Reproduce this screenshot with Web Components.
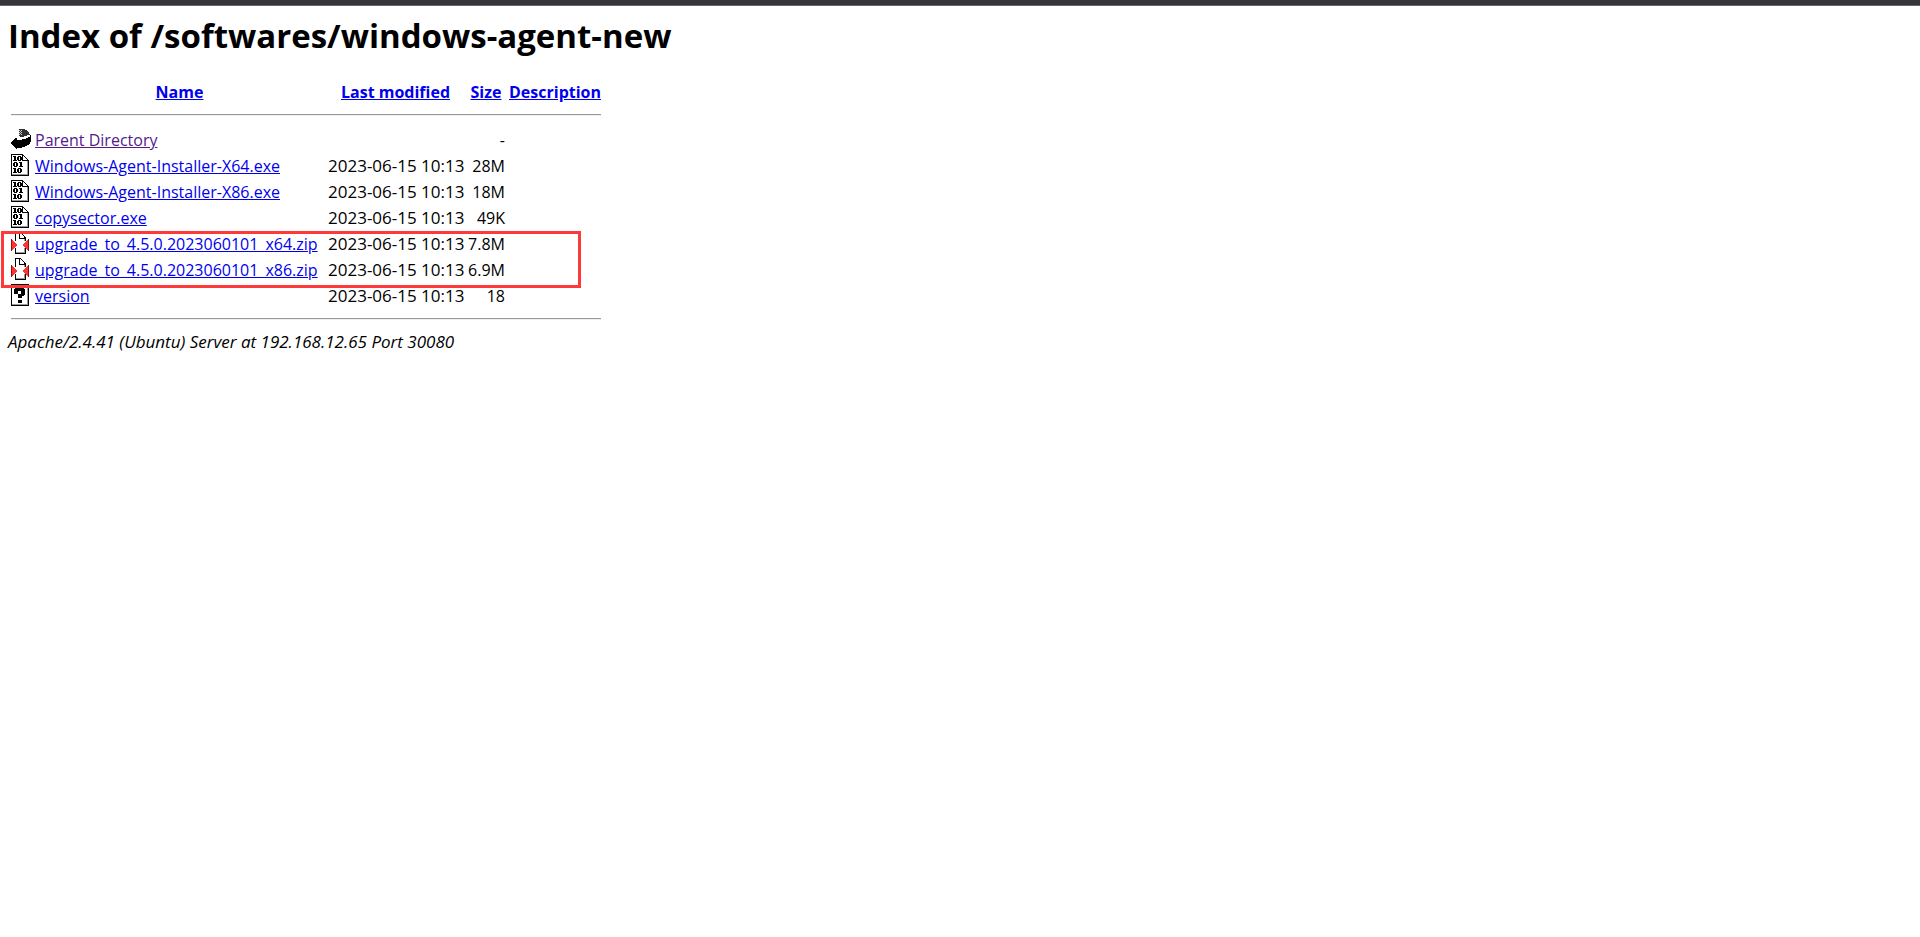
<!DOCTYPE html>
<html lang="en">
<head>
<meta charset="utf-8">
<title>Index of /softwares/windows-agent-new</title>
<style>
body { margin: 0; background: #fff; color: #000; font: 16px/22px "Open Sans", "Noto Sans", sans-serif; }
</style>
</head>
<body>
<index-page>
  <span slot="title">Index of /softwares/windows-agent-new</span>
  <directory-listing></directory-listing>
  <span slot="signature">Apache/2.4.41 (Ubuntu) Server at 192.168.12.65 Port 30080</span>
</index-page>

<script>
class IndexPage extends HTMLElement {
  constructor() {
    super();
    this.attachShadow({ mode: 'open' }).innerHTML = `
      <style>
        :host { display: block; }
        .edge { height: 5px; background: #35363a; border-bottom: 1px solid #69666b; }
        main { padding: 8px; }
        h1 { margin: 0 0 19px; font-size: 33px; line-height: 44px; font-weight: 700; }
        address { font-size: 17px; font-style: italic; }
      </style>
      <div class="edge"></div>
      <main>
        <h1><slot name="title"></slot></h1>
        <slot></slot>
        <address><slot name="signature"></slot></address>
      </main>`;
  }
}

const ICONS = {
  blank: '',
  back: `
    <path fill="#333" d="M8 1h6v1h2v1h1v1h1v2h1v1h-3v1h-3v1H9V8H8z"/>
    <path fill="#ccc" d="M8 2h1v1H8zM10 2h1v1h-1zM9 3h1v1H9zM8 4h1v1H8zM10 4h1v1h-1zM9 5h1v1H9zM8 6h1v1H8zM10 6h1v1h-1z"/>
    <path d="M19 7h1v7h-1v2h-1v1h-2v1h-2v1h-3v1H6v1H5v-1H4v-1H3v-1H2v-1H1v-1H0v-2h1v-1h1v-1h1v-1h1v-1h2v2h5v-1h4v-1h2V9h2z"/>`,
  binary: `
    <path d="M0 0h12v1h1v1h1v1h1v1h1v1h1v1h1v16H0z"/>
    <path fill="#fff" d="M1 1h10v6h5v13H1zM12 2h1v1h1v1h1v1h1v1h-4z"/>
    <path fill="#999" d="M16 7h1v14H1v-1h15z"/>
    <path fill-rule="evenodd" d="M2 2h3v4h1v1H2V6h1V3H2zM7 2h3v1h1v3h-1v1H7V6H6V3h1zM8 3v3h1V3z
      M3 8h3v1h1v3H6v1H3v-1H2V9h1zM4 9v3h1V9zM8 8h3v4h1v1H8v-1h1V9H8z
      M2 14h3v4h1v1H2v-1h1v-3H2zM7 14h3v1h1v3h-1v1H7v-1H6v-3h1zM8 15v3h1v-3z"/>`,
  compressed: `
    <path d="M4 0h6v1h1v1h1v1h1v1h1v1h1v17H4z"/>
    <path fill="#fff" d="M5 1h3v6h5v13H5zM9 1h1v1h1v1h1v1h1v2H9z"/>
    <path fill="#999" d="M13 7h1v14H5v-1h8z"/>
    <path fill="#fff" d="M4 9h2v7H4zM12 9h3v7h-3z"/>
    <path fill="#f33" d="M0 7h1v1h1v1h1v1h1v1h1v1h1v2H5v1H4v1H3v1H2v1H1v1H0zM18 7h-1v1h-1v1h-1v1h-1v1h-1v1h-1v2h1v1h1v1h1v1h1v1h1v1h1z"/>
    <path fill="#811" d="M0 7h1v12H0zM17 7h1v12h-1z"/>`,
  unknown: `
    <path d="M0 0h18v22H0z"/><path fill="#fff" d="M1 1h15v19H1z"/>
    <path fill="#999" d="M16 1h1v20H1v-1h15z"/>
    <path d="M4 4h9v1h1v6h-1v1h-2v2H7v-4h3V7H7v3H3V5h1zM7 16h4v3H7z"/>`
};

class FileIcon extends HTMLElement {
  connectedCallback() {
    if (this.shadowRoot) return;
    this.attachShadow({ mode: 'open' }).innerHTML = `
      <style>:host, svg { display: block; width: 20px; height: 22px; }</style>
      <svg viewBox="0 0 20 22" shape-rendering="crispEdges" aria-hidden="true">${ICONS[this.getAttribute('kind')]}</svg>`;
  }
}

const STAMP = '2023-06-15 10:13';
const FILES = [
  ['back', 'Parent Directory', '', '-'],
  ['binary', 'Windows-Agent-Installer-X64.exe', STAMP, '28M'],
  ['binary', 'Windows-Agent-Installer-X86.exe', STAMP, '18M'],
  ['binary', 'copysector.exe', STAMP, '49K'],
  ['compressed', 'upgrade_to_4.5.0.2023060101_x64.zip', STAMP, '7.8M'],
  ['compressed', 'upgrade_to_4.5.0.2023060101_x86.zip', STAMP, '6.9M'],
  ['unknown', 'version', STAMP, '18']
];

class DirectoryListing extends HTMLElement {
  constructor() {
    super();
    const row = ([kind, name, date, size]) => `
      <tr>
        <td class="pic"><file-icon kind="${kind}"></file-icon></td>
        <td><a href="#${name}" class="${kind}">${name}</a></td>
        <td class="date">${date}</td><td class="size">${size}</td><td></td>
      </tr>`;
    this.attachShadow({ mode: 'open' }).innerHTML = `
      <style>
        :host { display: block; position: relative; }
        table { border-spacing: 2px; table-layout: fixed; width: 596px; }
        th, td { padding: 2px 1px 0; white-space: nowrap; }
        .pic, .rule { padding: 1px; }
        th { text-align: center; }
        .icon { width: 22px; } .name { width: 291px; } .modified { width: 137px; }
        .bytes { width: 40px; }
        a { color: #00e; text-decoration: underline; }
        a.back { color: #551a8b; }
        .date, .size { text-align: right; }
        .date { font-size: 17px; }
        hr { margin: 8px 0; border: 0; border-top: 1px solid #9a9a9a; border-bottom: 1px solid #eee; }
        .highlight {
          position: absolute; left: -7px; top: 154px; width: 580px; height: 57px;
          box-sizing: border-box; border: 3px solid #ff3939; pointer-events: none;
        }
      </style>
      <table>
        <colgroup><col class="icon"><col class="name"><col class="modified"><col class="bytes"><col></colgroup>
        <thead>
          <tr>
            <th class="pic"><file-icon kind="blank"></file-icon></th>
            <th><a href="#name">Name</a></th><th><a href="#modified">Last modified</a></th>
            <th><a href="#size">Size</a></th><th><a href="#description">Description</a></th>
          </tr>
          <tr><th class="rule" colspan="5"><hr></th></tr>
        </thead>
        <tbody>${FILES.map(row).join('')}</tbody>
        <tfoot><tr><th class="rule" colspan="5"><hr></th></tr></tfoot>
      </table>
      <div class="highlight"></div>`;
  }
}

customElements.define('file-icon', FileIcon);
customElements.define('directory-listing', DirectoryListing);
customElements.define('index-page', IndexPage);
</script>
</body>
</html>
